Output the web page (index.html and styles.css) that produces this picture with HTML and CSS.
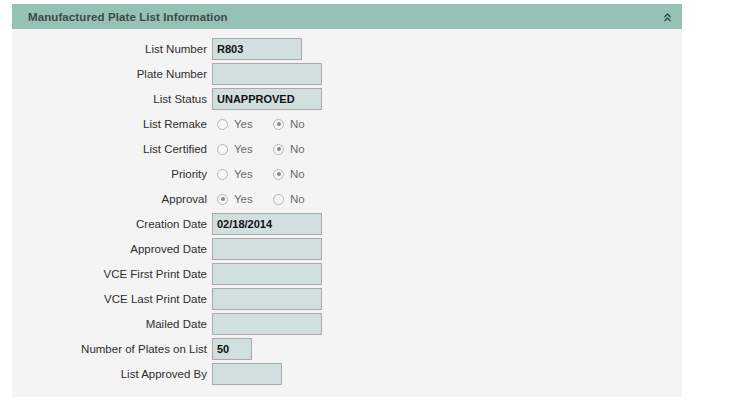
FILE: index.html
```html
<!DOCTYPE html>
<html>
<head>
<meta charset="utf-8">
<link rel="stylesheet" href="styles.css">
</head>
<body>
<div class="panel">
  <div class="panel-head">
    <span class="panel-title">Manufactured Plate List Information</span>
    <svg class="collapse" width="7" height="9" viewBox="0 0 7 9"><path d="M0.5 4 L3.5 1 L6.5 4 M0.5 8 L3.5 5 L6.5 8" fill="none" stroke="#2d4a44" stroke-width="1.4"/></svg>
  </div>
  <div class="panel-body">
    <div class="form">
      <label class="lbl">List Number</label>
      <div class="fld"><span class="box w90">R803</span></div>

      <label class="lbl">Plate Number</label>
      <div class="fld"><span class="box w110"></span></div>

      <label class="lbl">List Status</label>
      <div class="fld"><span class="box w110">UNAPPROVED</span></div>

      <label class="lbl">List Remake</label>
      <div class="fld radios">
        <span class="opt"><span class="radio"></span>Yes</span>
        <span class="opt"><span class="radio on"></span>No</span>
      </div>

      <label class="lbl">List Certified</label>
      <div class="fld radios">
        <span class="opt"><span class="radio"></span>Yes</span>
        <span class="opt"><span class="radio on"></span>No</span>
      </div>

      <label class="lbl">Priority</label>
      <div class="fld radios">
        <span class="opt"><span class="radio"></span>Yes</span>
        <span class="opt"><span class="radio on"></span>No</span>
      </div>

      <label class="lbl">Approval</label>
      <div class="fld radios">
        <span class="opt"><span class="radio on"></span>Yes</span>
        <span class="opt"><span class="radio"></span>No</span>
      </div>

      <label class="lbl">Creation Date</label>
      <div class="fld"><span class="box w110">02/18/2014</span></div>

      <label class="lbl">Approved Date</label>
      <div class="fld"><span class="box w110"></span></div>

      <label class="lbl">VCE First Print Date</label>
      <div class="fld"><span class="box w110"></span></div>

      <label class="lbl">VCE Last Print Date</label>
      <div class="fld"><span class="box w110"></span></div>

      <label class="lbl">Mailed Date</label>
      <div class="fld"><span class="box w110"></span></div>

      <label class="lbl">Number of Plates on List</label>
      <div class="fld"><span class="box w40">50</span></div>

      <label class="lbl">List Approved By</label>
      <div class="fld"><span class="box w70"></span></div>
    </div>
  </div>
</div>
</body>
</html>
```
FILE: styles.css
```css
html, body {
  margin: 0;
  padding: 0;
  background: #ffffff;
}
body {
  font-family: "Liberation Sans", Arial, sans-serif;
  font-size: 11px;
  color: #2a2a2a;
}
.panel {
  margin: 4px 0 0 12px;
  width: 670px;
}
.panel-head {
  height: 25px;
  background: #96c1b5;
  display: flex;
  align-items: center;
  justify-content: space-between;
  padding: 0 11px 0 16px;
}
.panel-title {
  font-weight: bold;
  font-size: 11.5px;
  color: #3b4a47;
  letter-spacing: 0.1px;
}
.collapse {
  display: block;
  margin-top: 1px;
}
.panel-body {
  background: #f4f4f4;
  padding: 9px 0 12px 0;
}
.form {
  display: grid;
  grid-template-columns: 195px 1fr;
  column-gap: 5px;
  row-gap: 3px;
  grid-auto-rows: 22px;
}
.lbl {
  text-align: right;
  line-height: 22px;
  white-space: nowrap;
  color: #2e2e2e;
  font-size: 11.5px;
}
.fld {
  display: flex;
  align-items: center;
}
.box {
  box-sizing: border-box;
  height: 22px;
  border: 1px solid #a7aaa9;
  background: #d1dfdf;
  font-weight: bold;
  color: #111;
  padding: 0 4px;
  line-height: 20px;
}
.w90 { width: 90px; }
.w110 { width: 110px; }
.w40 { width: 40px; }
.w70 { width: 70px; }
.radios {
  padding-left: 5px;
}
.opt {
  display: flex;
  align-items: center;
  width: 56px;
  color: #6a6a6a;
  font-size: 11.5px;
}
.radio {
  box-sizing: border-box;
  width: 11px;
  height: 11px;
  border-radius: 50%;
  border: 1px solid #b4b4b4;
  background: #f7f7f7;
  margin-right: 6px;
  position: relative;
}
.radio.on::after {
  content: "";
  position: absolute;
  left: 2.5px;
  top: 2.5px;
  width: 4px;
  height: 4px;
  border-radius: 50%;
  background: #8a8a8a;
}
```
